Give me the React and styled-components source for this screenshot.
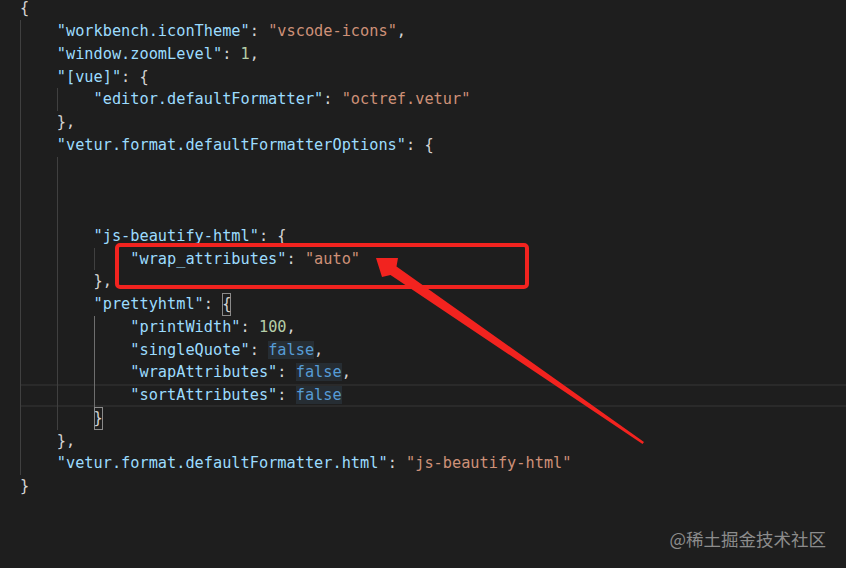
import React from 'react';
import styled, { createGlobalStyle, css } from 'styled-components';

const Global = createGlobalStyle`
  html, body { margin: 0; padding: 0; background: #1e1e1e; }
  body { overflow: hidden; }
`;

const Screen = styled.div`
  position: relative;
  width: 846px;
  height: 568px;
  overflow: hidden;
  background: #1e1e1e;
`;

const Code = styled.div`
  display: flex;
  flex-direction: column;
  padding-left: 20px;
  margin-top: -2.75px;
  font-family: "DejaVu Sans Mono", "Liberation Mono", monospace;
  font-size: 15.28px;
  color: #d4d4d4;
  white-space: pre;
`;

const Line = styled.div`
  display: flex;
  align-items: stretch;
  height: 22.75px;
  line-height: 22.75px;
  ${(p) =>
    p.$current &&
    css`
      box-shadow: inset 0 2px #2a2a2a, inset 0 -2px #2a2a2a;
    `}
`;

const Guide = styled.span`
  flex: none;
  width: 4ch;
  box-sizing: border-box;
  border-left: 1px solid ${(p) => (p.$active ? '#6e6e6e' : '#404040')};
`;

const colors = {
  k: '#9cdcfe',
  s: '#ce9178',
  n: '#b5cea8',
  b: '#569cd6',
  p: '#d4d4d4',
};

const Tok = styled.span`
  color: ${(p) => colors[p.$kind]};
  ${(p) =>
    p.$hl &&
    css`
      background: #262d33;
    `}
`;

const Bracket = styled.span`
  display: inline-block;
  box-sizing: border-box;
  width: 1ch;
  height: 22.75px;
  line-height: 20.75px;
  border: 1px solid #8a8a8a;
  text-indent: -1px;
  color: #d4d4d4;
`;

const Frame = styled.div`
  position: absolute;
  left: 115px;
  top: 243px;
  width: 414px;
  height: 46px;
  box-sizing: border-box;
  border: 4.5px solid #f2231f;
  border-radius: 5px;
`;

const ArrowLayer = styled.svg`
  position: absolute;
  left: 0;
  top: 0;
  pointer-events: none;
`;

const Watermark = styled.div`
  position: absolute;
  right: 20px;
  top: 528px;
  font-family: "Noto Sans CJK SC", "Noto Sans", sans-serif;
  font-size: 17.5px;
  line-height: 22px;
  color: #8c8c8c;
`;

const K = (t) => ['k', t];
const S = (t) => ['s', t];
const N = (t) => ['n', t];
const P = (t) => ['p', t];
const B = (t, hl) => ['b', t, hl];
const BR = (t) => ['br', t];

const lines = [
  { g: 0, t: [P('{')] },
  { g: 1, t: [K('"workbench.iconTheme"'), P(': '), S('"vscode-icons"'), P(',')] },
  { g: 1, t: [K('"window.zoomLevel"'), P(': '), N('1'), P(',')] },
  { g: 1, t: [K('"[vue]"'), P(': {')] },
  { g: 2, t: [K('"editor.defaultFormatter"'), P(': '), S('"octref.vetur"')] },
  { g: 1, t: [P('},')] },
  { g: 1, t: [K('"vetur.format.defaultFormatterOptions"'), P(': {')] },
  { g: 2, t: [] },
  { g: 2, t: [] },
  { g: 2, t: [] },
  { g: 2, t: [K('"js-beautify-html"'), P(': {')] },
  { g: 3, t: [K('"wrap_attributes"'), P(': '), S('"auto"')] },
  { g: 2, t: [P('},')] },
  { g: 2, t: [K('"prettyhtml"'), P(': '), BR('{')] },
  { g: 3, a: true, t: [K('"printWidth"'), P(': '), N('100'), P(',')] },
  { g: 3, a: true, t: [K('"singleQuote"'), P(': '), B('false', true), P(',')] },
  { g: 3, a: true, t: [K('"wrapAttributes"'), P(': '), B('false', true), P(',')] },
  { g: 3, a: true, cur: true, t: [K('"sortAttributes"'), P(': '), B('false', true)] },
  { g: 2, t: [BR('}')] },
  { g: 1, t: [P('},')] },
  { g: 1, t: [K('"vetur.format.defaultFormatter.html"'), P(': '), S('"js-beautify-html"')] },
  { g: 0, t: [P('}')] },
];

export default function App() {
  return (
    <Screen>
      <Global />
      <Code>
        {lines.map((ln, i) => (
          <Line key={i} $current={ln.cur}>
            {Array.from({ length: ln.g }).map((_, j) => (
              <Guide key={j} $active={ln.a && j === ln.g - 1} />
            ))}
            <span>
              {ln.t.map(([kind, text, hl], j) =>
                kind === 'br' ? (
                  <Bracket key={j}>{text}</Bracket>
                ) : (
                  <Tok key={j} $kind={kind} $hl={hl}>
                    {text}
                  </Tok>
                )
              )}
            </span>
          </Line>
        ))}
      </Code>
      <Frame />
      <ArrowLayer width="846" height="568" viewBox="0 0 846 568">
        <polygon
          points="376,258 398,258 396.5,266.5 644,442 642.5,444 390.5,275 382,277"
          fill="#f2231f"
        />
      </ArrowLayer>
      <Watermark>@稀土掘金技术社区</Watermark>
    </Screen>
  );
}
